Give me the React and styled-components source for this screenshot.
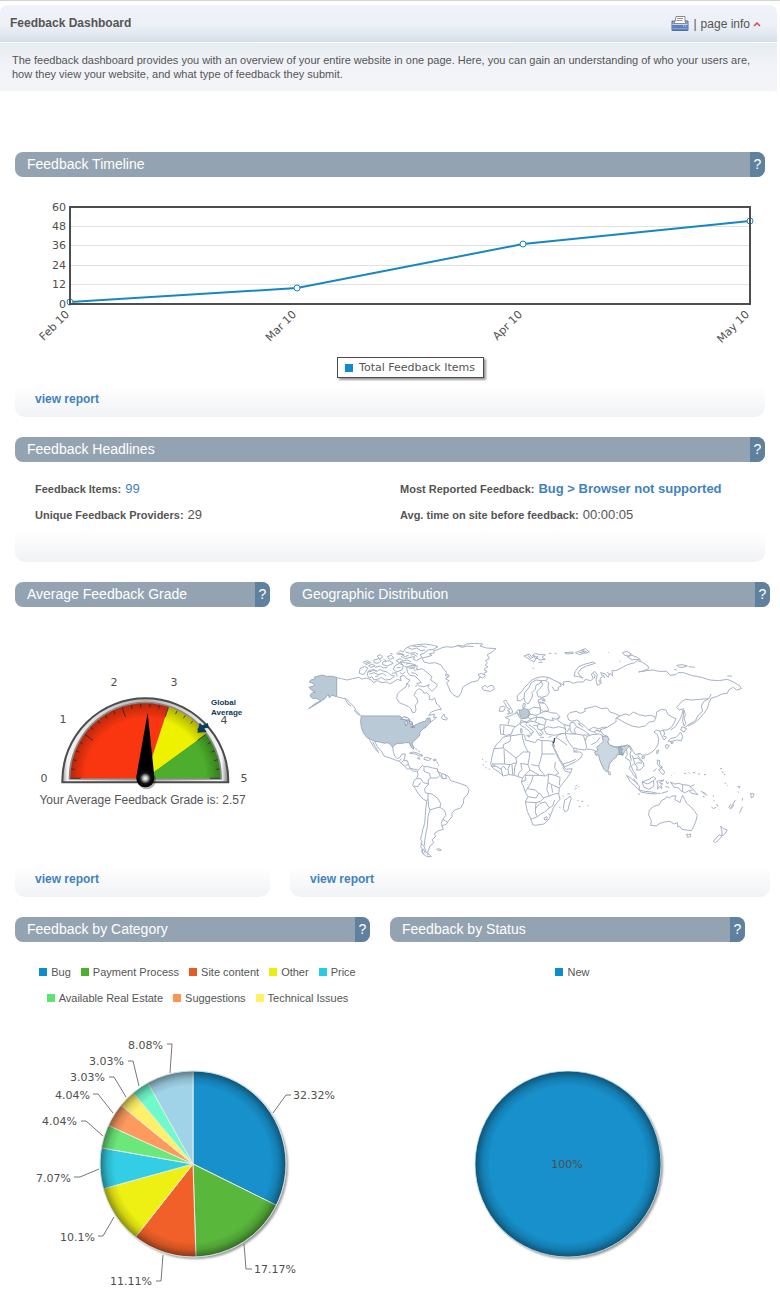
import { createGlobalStyle, styled } from 'styled-components';

const GlobalStyle = createGlobalStyle`
  * {
    box-sizing: border-box;
  }
  body {
    margin: 0;
    background: #fff;
    color: #555;
    font-family: "Liberation Sans", Arial, sans-serif;
    font-size: 12px;
  }
`;

const Page = styled.div`
  border-top: 1px solid #d4d4d4;
  padding-top: 4px;
`;

const TopBar = styled.header`
  display: flex;
  align-items: center;
  justify-content: space-between;
  height: 37px;
  margin-right: 3px;
  padding: 0 16px 0 10px;
  border-radius: 8px 8px 0 0;
  background: linear-gradient(#f0f3f9, #edf1f7 50%, #e2e8f2 80%, #d5dee6);
`;

const PageTitle = styled.h1`
  margin: 0;
  padding-bottom: 2px;
  font-size: 12px;
  font-weight: bold;
`;

const Tools = styled.div`
  display: flex;
  align-items: center;
  gap: 4px;
`;

const ToolButton = styled.button`
  display: flex;
  align-items: center;
  gap: 3px;
  padding: 0;
  border: 0;
  background: none;
  color: inherit;
  font: inherit;
  cursor: pointer;
`;

const Intro = styled.p`
  margin: 1px 3px 0 0;
  padding: 10px 16px 10px 12px;
  background: linear-gradient(#e7edf1, #f2f3f8 50%, #f3f4f8);
  font-size: 11px;
  line-height: 14px;
`;

const Dashboard = styled.main`
  display: flex;
  flex-direction: column;
  gap: 20px;
  margin-top: 61px;
  padding: 0 10px 0 15px;
`;

const Row = styled.div`
  display: grid;
  grid-template-columns: ${({ $columns }) => $columns || '1fr'};
  gap: 20px;
  padding-right: ${({ $inset }) => $inset || 0}px;
`;

const PanelBox = styled.section`
  display: flex;
  flex-direction: column;
  min-width: 0;
`;

const PanelHeader = styled.div`
  display: flex;
  height: 25px;
  overflow: hidden;
  border-radius: 8px;
  background: #94a3b1;
  color: #fff;
`;

const PanelTitle = styled.h2`
  flex: 1;
  margin: 0;
  padding-left: 12px;
  font-size: 14px;
  font-weight: normal;
  line-height: 24px;
`;

const HelpButton = styled.button`
  width: 15px;
  padding: 0 0 2px;
  border: 0;
  background: #5f819d;
  color: #fff;
  font: 14px "Liberation Sans", Arial, sans-serif;
  cursor: pointer;
`;

const PanelBody = styled.div`
  flex: 1;
`;

const PanelFooter = styled.div`
  height: 36px;
  padding-left: 20px;
  border-radius: 0 0 10px 10px;
  background: linear-gradient(#fff 15%, #f1f2f4);
  line-height: 36px;
`;

const ReportLink = styled.a`
  color: #3f83bd;
  font-weight: bold;
  text-decoration: none;
`;

const Drawing = styled.svg`
  display: block;
  width: 100%;
  height: auto;
  text {
    fill: #4f4f4f;
    font-family: "DejaVu Sans", Verdana, sans-serif;
    font-size: 11px;
  }
`;

const ChartKey = styled.div`
  display: flex;
  justify-content: center;
  padding: 5px 0 3px 41px;
`;

const KeyBox = styled.div`
  display: flex;
  align-items: center;
  gap: 6px;
  height: 21px;
  padding: 0 8px 0 7px;
  border: 1px solid #4a4a4a;
  box-shadow: 2px 2px 2px #999;
  font-family: "DejaVu Sans", Verdana, sans-serif;
  font-size: 11px;
`;

const Swatch = styled.span`
  width: 8px;
  height: 8px;
  background: ${({ $color }) => $color};
`;

const Facts = styled.dl`
  display: grid;
  grid-template-columns: 1fr 1fr;
  height: 64px;
  margin: 0;
  padding: 14px 0 0 20px;
  font-size: 11px;
  line-height: 26px;
`;

const Fact = styled.div`
  display: flex;
  gap: 4px;
  height: 26px;
  white-space: nowrap;
  dt {
    font-weight: bold;
  }
  dd {
    margin: 0;
    font-size: 13px;
  }
  a {
    color: #3f83bd;
    text-decoration: none;
  }
`;

const GradeText = styled.p`
  margin: 0 0 54px;
  text-align: center;
  line-height: 14px;
`;

const Legend = styled.ul`
  display: flex;
  flex-wrap: wrap;
  justify-content: center;
  column-gap: 10px;
  min-height: 69px;
  align-content: flex-start;
  margin: 0;
  padding: 17px 0 0 10px;
  list-style: none;
  font-size: 11px;
  line-height: 26px;
  li {
    display: flex;
    align-items: center;
    gap: 4px;
  }
`;

const timeline = [
  { label: 'Feb 10', x: 55, y: 125 },
  { label: 'Mar 10', x: 282, y: 111 },
  { label: 'Apr 10', x: 508, y: 67 },
  { label: 'May 10', x: 735, y: 44 },
];

const timelineTicks = [
  [60, 30], [48, 49], [36, 68], [24, 88], [12, 107], [0, 127],
];

const categories = [
  { name: 'Bug', color: '#0f8ccb' },
  { name: 'Payment Process', color: '#4bb02c' },
  { name: 'Site content', color: '#e95a22' },
  { name: 'Other', color: '#eaed0e' },
  { name: 'Price', color: '#26cbe4' },
  { name: 'Available Real Estate', color: '#60e36e' },
  { name: 'Suggestions', color: '#ff9354' },
  { name: 'Technical Issues', color: '#fff064' },
];

// line: leader points from the rim out to the label
const slices = [
  { value: 32.32, color: '#1790cb', line: '258,102 271,84 276,84', x: 278, y: 88 },
  { value: 17.17, color: '#59b83c', line: '229,233 231,258 237,258', x: 239, y: 262 },
  { value: 11.11, color: '#f06028', line: '148,244 146,270 141,270', x: 137, y: 274, end: true },
  { value: 10.1, color: '#eef014', line: '99,206 88,225 83,225', x: 80, y: 230, end: true },
  { value: 7.07, color: '#33cee6', line: '84,158 65,166 59,166', x: 56, y: 171, end: true },
  { value: 4.04, color: '#6ce77a', line: '88,125 71,110 66,110', x: 62, y: 114, end: true },
  { value: 4.04, color: '#ff9a5f', line: '98,102 83,83 78,83', x: 75, y: 88, end: true },
  { value: 3.03, color: '#fff06a', line: '111,86 99,66 94,66', x: 90, y: 70, end: true },
  { value: 3.03, color: '#70facb', line: '124,75 118,50 113,50', x: 109, y: 54, end: true },
  { value: 8.08, color: '#a1d3e8', line: '155,62 157,33 152,33', x: 148, y: 38, end: true },
];

const americas = [
  // canada
  'M110,143L124,146 142,150 158,146 176,142 186,147 200,144 214,150 220,158 232,152 246,158 262,156 268,162 280,156 292,148 304,152 300,140 312,136 320,146 330,150 322,160 318,170 302,182 292,192 290,206 298,218 312,224 326,230 334,238 336,246 344,248 348,240 346,226 354,216 350,204 342,196 348,184 356,176 368,182 372,190 380,188 388,196 388,208 396,210 404,204 410,222 416,226 424,238 410,240 394,246 386,256 396,254 404,252 400,262 410,262 400,270 392,276',
  'M110,200L124,204 138,206 150,218 162,230 168,242 184,258M136,208L144,222 154,228M162,240L172,252 180,256',
  'M424,262L432,252 434,260 442,264 440,270 428,268Z',
  // arctic islands
  'M290,72L300,62 310,66 316,56 330,48 350,44 376,42 400,46 414,50 400,58 384,60 372,70 360,74 366,82 350,92 340,88 344,80 330,82 316,86 304,80 312,74Z',
  'M322,52L336,58 350,54 362,62 376,60M316,66L330,70 346,68 354,74M296,70L308,72 314,80 326,76M338,48L350,50 364,48 380,52M332,76L340,72 352,80',
  'M320,112L336,106 352,108 350,120 366,116 382,128 396,140 392,150 412,164 408,172 396,184 384,172 388,164 372,170 358,168 350,160 364,158 354,146 344,138 330,136 322,126Z',
  'M202,136L204,124 218,118 232,124 240,118 246,122 262,126 270,134 284,138 272,148 256,150 244,142 238,146 222,150 216,140 208,144Z',
  'M208,132L222,128 234,134 248,130 258,138M226,140L236,138M204,126L214,124 222,120 230,126',
  'M180,116L194,110 204,114 196,126 190,134 178,130Z',
  'M190,96L202,92 212,98 198,104ZM206,108L216,102 226,108 212,112ZM222,90L236,86 244,92 234,100 222,98Z',
  'M232,78L242,74 248,82 238,86ZM248,96L268,92 280,100 262,108 248,104ZM262,80L274,76 282,84 268,88Z',
  'M284,108L298,100 310,106 306,120 290,126 280,118ZM288,92L300,86 310,92 298,98ZM300,96L316,98 346,104 344,112 314,110Z',
  'M196,100L206,96M250,88L258,92M270,70L278,72M276,130L288,128 292,140M318,160L328,166 326,172M346,170L352,166',
  'M226,112L240,108 250,114 262,112M300,128L308,132 316,126M310,92L322,90 334,96M318,102L332,100M290,114L302,112M328,116L340,114 346,124M334,128L346,130 354,138',
  // greenland, iceland
  'M372,96L366,84 384,80 396,76 388,72 404,68 400,62 412,60 424,54 440,50 456,52 476,46 490,48 500,42 524,40 548,42 540,48 560,54 588,56 576,66 562,74 568,86 556,92 562,98 556,106 564,110 552,118 560,126 552,130 556,138 548,144 540,140 534,152 516,156 500,164 488,172 484,188 474,202 462,196 452,186 446,172 440,158 448,152 436,146 446,140 436,136 440,128 430,116 422,104 404,98 388,100Z',
  'M540,142L534,134 544,130 552,134M554,120L562,124M470,46L486,52 502,48 520,50M440,132L448,136 444,142',
  'M546,172L556,166 562,172 568,168 578,166 584,176 572,184 558,182 550,180Z',
  // mexico and central america
  'M206,324L214,338 220,350 230,362 236,368 226,350 218,336M224,334L232,350 246,366 252,378 270,384 286,390 298,394 306,402 316,410 322,418 330,416 340,424 352,424',
  'M278,352L280,364 284,378 292,386 300,382 306,372 316,372 314,384 310,392 322,392 326,404 330,414 342,418 352,418M298,394L304,386M310,392L304,398M326,404L316,406',
  // caribbean
  'M328,370L340,366 354,370 368,378 358,378 346,372ZM372,384L380,382 394,386 386,392 372,388ZM352,384L360,384 358,388ZM400,388L408,388 408,392 400,392Z',
  'M346,354L352,360M354,362L360,366M362,372L368,376M410,394L414,402M416,404L416,408',
  // south america
  'M352,424L360,414 368,406 372,410 384,410 398,414 412,416 414,426 424,430 436,434 446,440 452,452 466,456 484,462 500,468 507,478 504,492 492,504 490,520 482,534 464,540 456,550 456,560 446,572 440,582 426,588 430,598 416,602 404,610 406,620 396,630 402,638 390,648 386,660 382,668 394,680 380,680 366,668 368,660 362,650 366,636 362,626 366,612 368,600 374,580 376,556 378,530 380,514 366,504 354,490 346,476 338,466 342,452 350,446 354,434Z',
  'M372,412L372,424 388,430 392,444 384,450 386,462 370,458 362,446 350,446M386,462L374,476 376,488 384,490 396,492 414,506 422,520 420,532 434,542 438,556 428,568 424,580 426,588M384,490L384,506 380,514M384,506L386,530 390,540 408,534 420,532M390,540L384,560 382,590 376,620 372,650 378,664M412,420L420,436 412,444 400,444 392,444M424,432L428,446M436,434L440,446 428,446 420,436M342,468L354,470 362,458M428,568L442,576M370,656L376,670M364,660L372,674M376,664L386,672 380,676M362,640L370,646',
  'M410,658L416,656 424,660 416,662Z',
];

const alaska = 'M110,143L110,200 96,196 88,203 84,192 76,205 64,213 50,222 36,230 26,236 44,222 62,212 50,205 38,205 30,198 34,190 46,186 34,180 27,172 40,168 44,163 28,156 32,150 46,146 42,142 52,139 66,135 80,139 98,139Z';

const usa = 'M184,258L300,258 304,262 316,264 326,268 334,276 340,288 356,280 366,276 376,274 382,264 390,264 392,276 384,284 378,292 370,296 360,306 358,318 350,326 340,334 336,342 342,352 340,358 332,348 328,338 316,338 306,340 294,340 284,344 278,352 270,342 262,338 254,340 240,336 224,334 212,328 200,322 190,308 184,292 182,274Z';

const lakes = 'M302,268L312,260 324,264 330,270 318,270 308,268ZM318,288L314,276 320,270 322,282ZM328,274L336,276 338,282 330,282ZM332,292L342,288 344,292Z';

const eurasia = [
  // british isles and scandinavia
  'M-38,252L-30,246 -38,242 -30,238 -40,232 -44,222 -50,214 -42,210 -38,218 -30,230 -24,240 -22,248 -34,252ZM-62,244L-60,232 -50,228 -44,234 -50,244Z',
  'M-8,212L-8,196 6,184 14,172 26,160 32,152 48,144 66,140 84,142 78,152 64,152 60,160 48,166 46,178 36,188 38,198 32,210 24,222 16,216 12,204 2,212Z',
  'M12,204L14,188 26,174 34,158 48,150 64,152L68,166 58,178 50,186 54,200 66,202 80,198 88,188 84,172 86,158 78,152M8,232L10,220 16,222 14,232',
  // russia
  'M84,142L100,150 118,158 124,168 114,172 116,180 104,182 96,170M118,158L132,166 130,156 148,154 160,160 172,156 190,156 196,148 212,152 220,146 214,132 224,124 232,134 228,150 232,166 244,160 240,146 248,140 242,128 256,132 264,142 270,130 278,138 276,122 288,122 308,112 322,104 344,98 352,92 366,96 384,108 386,116 372,122 356,126 380,122 400,120 416,124 440,124 450,136 468,134 474,128 490,128 514,136 544,142 570,150 596,152 622,148 640,156 660,168 664,176 650,180 640,172 626,180 622,190 606,192 590,200 574,204',
  'M574,192L566,206 552,214 544,228 548,244 536,254 526,272 506,284 492,294M574,204L566,220 562,236 552,250 540,264 524,278 504,288M566,206L540,208 516,210 496,208 484,216 470,232 478,240 490,236 486,254 480,268 466,290 452,300',
  'M492,240L496,254 492,266 498,280 492,288 488,272 490,256Z',
  'M162,138L166,124 176,110 196,102 220,96 226,100 200,108 184,116 174,128 180,138 190,144 176,140Z',
  'M218,130L226,136 222,146M236,150L240,158M250,134L254,144M262,126L268,134',
  // arctic ocean
  'M12,78L28,72 34,80 46,70 60,74 76,74 66,82 76,88 60,90 50,84 42,96 32,90 22,84ZM86,70L94,70M104,70L110,72M134,68L158,66 160,70 138,72ZM166,68L182,62 196,68 178,74ZM184,60L196,56 208,66 196,70Z',
  'M24,76L32,86 44,78 54,82M40,74L46,86 56,78M176,66L190,70M188,60L200,66',
  'M308,68L320,64 334,72 326,78 314,76ZM322,80L336,76 352,82 362,90 348,88 336,90ZM298,92L302,96M470,106L486,104 502,108 490,112 478,112ZM506,110L524,112M462,118L470,120M622,138L636,138M264,66L266,68M38,114L42,116M56,98L68,96',
  // western and central europe
  'M-60,284L-36,286 -14,290 -22,300 -26,312 -40,316 -58,312ZM-48,288L-50,312M-36,284L-32,268 -44,262 -30,258 -18,252 -8,248 -2,262 4,268 0,280 -14,290M-14,250L-6,240 0,240M-10,246L-4,256',
  'M0,280L10,276 20,278 18,284 30,296 42,306 36,308 34,316 28,304 14,292 4,288ZM6,266L24,262 32,268 20,276 4,272M20,316L30,316 28,322ZM2,296L6,296 6,308 2,308Z',
  'M20,278L34,274 46,276 60,282 74,286 72,296 62,300 70,310 60,318 52,306 46,298 36,290 26,284M34,274L32,266 50,262 70,264 78,272 74,286M46,276L50,264M40,286L52,286 60,282M52,286L54,298 62,300M58,308L66,314M60,322L72,322',
  'M26,240L40,232 60,234 62,250 48,256 30,252ZM30,252L24,262M48,256L50,262M54,210L68,204 76,210 70,218 56,216ZM56,218L74,220 82,230 86,242 72,246 62,238 60,228ZM62,250L76,242 92,248 110,250 120,260 108,268 96,264 100,272 88,270 78,268 66,262 52,262M64,208L74,214M66,212L74,208',
  'M120,260L112,270 132,284 150,288M132,284L138,300M148,294L142,306',
  // middle east
  'M72,296L84,290 100,294 116,290 132,294 138,300 136,310 120,312 104,316 90,314 78,310Z',
  'M100,334L108,322 120,312 136,310L140,326 148,340 160,354 164,366 180,366 188,372 182,384 166,396 148,404 132,412 128,400 118,386 110,368 100,350ZM132,412L130,402 150,396 168,388M160,366L172,360M108,322L120,330 142,346M86,322L94,320',
  'M136,310L150,312 168,312 190,316 196,334 200,352 196,360 178,358 162,354M150,280L160,276 170,290 162,300 168,312 154,308 150,296Z',
  'M146,270L142,256 150,248 168,244 182,250 196,244 194,236 214,232 226,228 244,236 262,234 270,246 288,252 300,258 288,264 288,276 270,286 262,292 250,292 236,296 220,292 206,300 196,290 184,280 176,284 178,274 170,270 156,274Z',
  'M170,290L182,296 196,304 208,314 190,316M206,300L220,306 232,300 240,304M196,334L200,320 216,314 238,312 250,318M200,358L214,358 228,364M214,344L230,336 240,322M178,284L190,292M222,306L230,312M228,300L244,306',
  // china and mongolia
  'M300,258L316,252 328,256 340,246 356,254 376,258 392,256 408,262 402,274 388,276 376,288 356,292 336,288 318,280 304,272 290,264',
  'M408,262L410,246 424,238 438,240 444,254 458,262 468,266 462,280 454,292 442,300 430,300 420,304 410,300 402,306 412,314 416,326 414,344 406,356 396,366 382,374 368,376 360,370 346,374 338,362 330,348 318,346 300,350 282,350 268,344 262,332 262,320 248,312 240,300 262,292',
  'M430,300L434,312 430,318 440,322 432,330 424,316 420,304M410,362L416,360 414,370 410,370ZM366,380L374,380 372,386 366,386Z',
  'M486,290L500,296 492,306 482,300ZM482,306L488,320 484,332 470,330 456,334 444,334 452,326 468,322 476,314ZM438,344L448,346 442,356 436,352ZM452,338L460,336 456,342Z',
  // south-east asia
  'M264,424L270,426 272,434 266,434ZM320,360L322,374 316,384 330,392 332,404 328,416 334,424 340,434 350,446 346,432 338,420 334,408 344,400 352,412 350,420 360,420 372,408 370,398 360,386 354,376 360,370M344,400L340,386 354,384 366,398M340,386L336,376M348,404L352,398 366,400M328,348L334,362 330,372 334,392',
  'M320,436L332,444 346,456 358,468 358,480 344,468 330,454ZM358,480L374,484 394,486 412,490 404,492 382,490 362,486ZM366,456L376,452 388,448 400,440 408,446 400,452 402,464 398,472 386,478 372,472ZM366,456L384,462 400,452M340,446L354,462',
  'M412,478L414,464 410,454 432,450 418,458 428,462 422,466 426,476 418,470ZM412,390L420,392 418,404 428,412 420,412 412,402ZM416,418L426,416 434,426 430,434 422,428ZM400,424L410,416M424,490L444,484M438,452L442,462 446,456M414,490L422,490M436,470L448,472M354,492L360,492',
  'M452,456L464,462 476,460 488,464 506,466 518,476 528,488 534,494 516,490 506,482 496,488 484,484 476,474 462,472ZM488,464L488,484M510,470L524,464M542,484L556,490M550,490L562,496M508,482L518,480',
  // oceania
  'M388,540L400,530 418,524 424,512 436,506 440,500 448,504 456,498 468,498 464,508 480,518 484,506 488,496 494,508 500,520 512,530 524,544 532,556 528,572 522,588 514,602 498,600 486,598 478,588 474,592 472,578 462,582 450,574 434,576 420,580 408,588 392,586 394,572 386,556Z',
  'M500,612L506,614 512,612 512,620 502,622ZM602,588L610,596 622,600 614,612 606,618 606,604ZM598,614L606,618 594,632 586,638 580,634Z',
  'M454,436L456,436M462,428L464,430M492,430L498,430M506,428L510,430M520,430L522,426 526,430M534,432L540,432M552,434L558,434M600,416L606,416M606,424L610,430M612,434L616,434M614,460L618,460M622,466L624,468M652,470L660,470 656,476M654,484L656,488M692,490L702,492 700,500 694,504ZM580,496L580,500M582,510L582,514M574,530L580,536 588,532M590,522L594,530M630,538L646,510M634,536L642,524M626,534L632,522M658,550L668,530M668,504L666,512M548,500L554,500M596,538L598,538',
  // africa
  'M-78,356L-70,342 -60,334 -52,322 -36,318 -14,316 6,312 14,316 16,330 30,334 46,338 52,328 66,332 84,332 98,334 104,350 96,342 108,370 118,390 128,406 138,418 156,416 152,428 140,446 128,460 118,474 116,492 120,508 108,522 100,534 94,550 88,566 72,582 46,586 38,584 32,566 22,544 16,516 24,500 16,486 10,468 4,456 8,444 -6,440 -16,436 -34,434 -50,438 -66,424 -80,416 -88,402 -84,380Z',
  'M-78,356L-50,354 -50,344 -30,334 -28,318M-50,354L-12,384 10,366 30,366M6,312L8,326 14,346 24,366M66,332L66,372 104,372M66,372L60,396 56,408 34,404M30,366L28,382 24,404 2,400M-12,384L-10,398 -30,404 -46,402 -84,402M-46,402L-48,358M-84,402L-66,412 -56,418 -52,438M-30,404L-36,416 -34,434M-10,398L-16,412 -18,436M2,400L6,418 -4,430 -6,440M24,404L30,420 14,436 8,444M30,420L48,430 58,436 76,438 86,432 104,436 116,430 104,414 106,396M56,408L60,420 76,438M128,412L136,424 152,428M104,436L120,442 118,466M86,432L84,458 100,466 118,474M14,436L40,436 58,436M40,436L34,456 22,476 16,486M22,476L46,480 56,490 48,504 24,500M84,458L80,478 88,498 70,504 60,490 56,490M88,498L104,492 116,490M16,516L48,518 62,514 74,502M48,518L46,548 52,560 38,566 32,566M46,536L60,520 76,516 88,534 74,546 62,552 52,560M88,534L98,528 104,510M72,564L80,560 82,568 74,570ZM-58,418L-50,408 -40,420M-24,404L-22,434M-88,408L-74,410M94,466L98,488M4,456L18,450 16,440M86,550L90,556',
  'M134,510L142,506 150,498 154,506 148,522 144,540 136,546 130,536 132,524ZM166,470L172,464M174,472L178,468M184,514L190,514M172,514L176,510M176,530L182,530M202,526L206,528M128,496L132,500M118,532L122,534M142,492L150,492M164,478L170,474M-114,388L-110,390M-104,394L-100,396M-112,404L-108,406M-104,412L-100,414M-94,418L-90,416',
];

const germany = 'M-2,240L8,240 10,232 16,236 26,240 28,252 22,264 6,266 0,258Z';
const india = 'M246,320L262,318 268,330 262,336 270,346 286,352 300,356 302,348 316,350 322,344 328,348 320,358 314,364 308,376 304,362 298,374 292,372 290,380 278,390 268,402 266,418 260,426 252,418 244,402 238,386 236,374 228,376 224,366 234,362 230,352 240,344 250,334Z';

function polar(cx, cy, r, degrees) {
  const angle = (degrees * Math.PI) / 180;
  return [cx + r * Math.cos(angle), cy - r * Math.sin(angle)];
}

function wedge(cx, cy, r, from, to) {
  const [x1, y1] = polar(cx, cy, r, from);
  const [x2, y2] = polar(cx, cy, r, to);
  const large = from - to > 180 ? 1 : 0;
  return `M${cx},${cy}L${x1},${y1}A${r},${r} 0 ${large} 1 ${x2},${y2}Z`;
}

function Panel({ title, report, footer, children }) {
  return (
    <PanelBox>
      <PanelHeader>
        <PanelTitle>{title}</PanelTitle>
        <HelpButton type="button" aria-label={`Help: ${title}`}>?</HelpButton>
      </PanelHeader>
      <PanelBody>{children}</PanelBody>
      {footer && (
        <PanelFooter>
          {report && <ReportLink href="#report">view report</ReportLink>}
        </PanelFooter>
      )}
    </PanelBox>
  );
}

function PrinterIcon() {
  return (
    <svg width="18" height="16" viewBox="0 0 18 16" aria-hidden="true">
      <path d="M1 5h16v9.500H1z" fill="#8fabd6" stroke="#55719f" />
      <path d="M1.500 9h15v5h-15z" fill="#5f81ba" />
      <path d="M1.500 8.500h15" stroke="#c3d4ee" />
      <path d="M5 .5h9v5l1 2H3l1-2z" fill="#fff" stroke="#888" />
      <path d="M6 2.500h6M5.500 4.500h6" stroke="#999" />
      <path d="M12 10h1M14 10h1" stroke="#dfe9f8" />
      <path d="M2 12.500h14" stroke="#86a3d2" />
    </svg>
  );
}

function TimelineChart() {
  return (
    <Drawing viewBox="0 0 750 175" role="img" aria-label="Feedback timeline">
      {timelineTicks.slice(1, 5).map(([value, y]) => (
        <path key={value} d={`M56 ${y}.5H734`} stroke="#e2e2e2" />
      ))}
      <polyline
        points={timeline.map((point) => `${point.x},${point.y}`).join(' ')}
        fill="none"
        stroke="#1688bf"
        strokeWidth="2"
      />
      {timeline.map((point) => (
        <circle key={point.label} cx={point.x} cy={point.y} r="3" fill="#fff" stroke="#1688bf" />
      ))}
      <rect x="55" y="30" width="680" height="97" fill="none" stroke="#4d4d4d" strokeWidth="2" />
      {timelineTicks.map(([value, y]) => (
        <text key={value} x="51" y={y + 4} textAnchor="end">{value}</text>
      ))}
      {timeline.map((point) => (
        <text
          key={point.label}
          textAnchor="end"
          transform={`translate(${point.x} 138) rotate(-45)`}
        >
          {point.label}
        </text>
      ))}
    </Drawing>
  );
}

function GradeGauge() {
  const ticks = Array.from({ length: 26 }, (_, i) => i);
  return (
    <Drawing viewBox="0 0 255 186" role="img" aria-label="Average feedback grade gauge">
      <defs>
        <linearGradient id="rim" x1="0" x2="1">
          <stop offset="0" stopColor="#999" />
          <stop offset="0.03" stopColor="#f4f4f4" />
          <stop offset="0.5" stopColor="#b5b5b5" />
          <stop offset="0.96" stopColor="#f4f4f4" />
          <stop offset="1" stopColor="#777" />
        </linearGradient>
        <radialGradient id="face" gradientUnits="userSpaceOnUse" cx="376" cy="355" r="226">
          <stop offset="0.8" stopColor="#000" stopOpacity="0" />
          <stop offset="1" stopColor="#000" stopOpacity="0.28" />
        </radialGradient>
        <radialGradient id="hub">
          <stop offset="0" stopColor="#fff" />
          <stop offset="0.25" stopColor="#bbb" />
          <stop offset="0.6" stopColor="#111" />
          <stop offset="1" stopColor="#000" />
        </radialGradient>
      </defs>
      <g transform="translate(5 53) scale(0.3333)">
        <path d="M127,367V362A249,247 0 0 1 625,362V367Z" fill="url(#rim)" stroke="#4c4c4c" strokeWidth="6" />
        <path d="M146,359V355A230,230 0 0 1 606,355V359Z" fill="#888" />
        <path d={wedge(376, 355, 225, 180, 72)} fill="#fa3610" />
        <path d={wedge(376, 355, 225, 72, 36)} fill="#eef200" />
        <path d={wedge(376, 355, 225, 36, 0)} fill="#4cae2c" />
        <path d={wedge(376, 355, 225, 180, 0)} fill="url(#face)" />
        {ticks.map((i) => {
          const major = i % 5 === 0;
          const [x1, y1] = polar(376, 355, 224, 180 - i * 7.2);
          const [x2, y2] = polar(376, 355, major ? 194 : 213, 180 - i * 7.2);
          return (
            <path
              key={i}
              d={`M${x1},${y1}L${x2},${y2}`}
              stroke="#222"
              strokeOpacity="0.75"
              strokeWidth="3"
            />
          );
        })}
        <path d="M532,218L539,188 547,196 564,189 566,204 553,205 560,216Z" fill="#0d3d5c" />
        <circle cx="380" cy="360" r="28" fill="#000" opacity="0.3" />
        <path d="M383,158L403,350 376,372 349,350Z" fill="#000" />
        <circle cx="376" cy="355" r="27" fill="url(#hub)" />
      </g>
      <text x="29" y="175" textAnchor="middle">0</text>
      <text x="48" y="116" textAnchor="middle">1</text>
      <text x="99" y="79" textAnchor="middle">2</text>
      <text x="159" y="79" textAnchor="middle">3</text>
      <text x="209" y="117" textAnchor="middle">4</text>
      <text x="229" y="175" textAnchor="middle">5</text>
      <MarkerText x="196" y="98">Global</MarkerText>
      <MarkerText x="196" y="108">Average</MarkerText>
    </Drawing>
  );
}

const MarkerText = styled.text`
  && {
    fill: #0d3a55;
    font: bold 8px "Liberation Sans", Arial, sans-serif;
  }
`;

function WorldMap() {
  return (
    <Drawing viewBox="0 0 480 254" role="img" aria-label="World map of feedback">
      <g fill="none" stroke="#a6b1c4" strokeWidth="3" strokeLinejoin="round">
        <g transform="translate(10 23) scale(0.3333)">
          {americas.map((d) => <path key={d} d={d} />)}
          <path d={alaska} fill="#b9c9d6" stroke="#9aabbb" />
          <path d={usa} fill="#b9c9d6" stroke="#9aabbb" />
          <path d={lakes} fill="#fff" stroke="#8b9cb0" />
        </g>
        <g transform="translate(230 23) scale(0.3333)">
          {eurasia.map((d) => <path key={d} d={d} />)}
          <path d={germany} fill="#b9c9d6" stroke="#9aabbb" />
          <path d={india} fill="#ccd8e1" stroke="#9aabbb" />
          <path d="M296,350L304,352 308,360 304,364 308,376 298,372Z" fill="#a9bccb" stroke="#8b9cb0" />
          <path d="M104,324L102,336 98,340" stroke="#2f4963" strokeWidth="4" />
        </g>
      </g>
    </Drawing>
  );
}

function PieShading({ id }) {
  return (
    <>
      <defs>
        <radialGradient id={id}>
          <stop offset="0.84" stopColor="#000" stopOpacity="0" />
          <stop offset="0.92" stopColor="#000" stopOpacity="0.13" />
          <stop offset="1" stopColor="#000" stopOpacity="0.42" />
        </radialGradient>
      </defs>
      <circle cx="178" cy="153" r="93" fill={`url(#${id})`} />
      <circle cx="178" cy="153" r="93" fill="none" stroke="#cfe3ea" strokeOpacity="0.8" />
    </>
  );
}

const PieDisc = styled.circle`
  filter: drop-shadow(2px 2px 1px #999);
`;

function CategoryPie() {
  let angle = 90;
  const total = slices.reduce((sum, slice) => sum + slice.value, 0);
  const wedges = slices.map((slice) => {
    const from = angle;
    angle -= (slice.value / total) * 360;
    return { ...slice, d: wedge(178, 153, 93, from, angle) };
  });

  return (
    <Drawing viewBox="0 0 355 289" role="img" aria-label="Feedback by category">
      <PieDisc cx="178" cy="153" r="93" fill="#ddd" />
      {wedges.map((slice) => (
        <path key={slice.d} d={slice.d} fill={slice.color} stroke="#e3eedd" strokeWidth="1" />
      ))}
      <PieShading id="category-shade" />
      {wedges.map((slice) => (
        <g key={slice.line}>
          <polyline points={slice.line} fill="none" stroke="#777" />
          <text x={slice.x} y={slice.y} textAnchor={slice.end ? 'end' : 'start'}>
            {slice.value}%
          </text>
        </g>
      ))}
    </Drawing>
  );
}

function StatusPie() {
  return (
    <Drawing viewBox="0 0 355 289" role="img" aria-label="Feedback by status">
      <PieDisc cx="178" cy="153" r="93" fill="#1790cb" />
      <PieShading id="status-shade" />
      <text x="177" y="157" textAnchor="middle">100%</text>
    </Drawing>
  );
}

export default function App() {
  return (
    <Page>
      <GlobalStyle />
      <TopBar>
        <PageTitle>Feedback Dashboard</PageTitle>
        <Tools>
          <ToolButton type="button" aria-label="Print">
            <PrinterIcon />
          </ToolButton>
          <span>|</span>
          <ToolButton type="button">
            page info
            <svg width="8" height="6" viewBox="0 0 8 6" aria-hidden="true">
              <path d="M1 5L4 2 7 5" fill="none" stroke="#d04a52" strokeWidth="1.500" />
            </svg>
          </ToolButton>
        </Tools>
      </TopBar>
      <Intro>
        The feedback dashboard provides you with an overview of your entire website in one page.
        Here, you can gain an understanding of who your users are, how they view your website, and
        what type of feedback they submit.
      </Intro>
      <Dashboard>
        <Row $inset={5}>
          <Panel title="Feedback Timeline" footer report>
            <TimelineChart />
            <ChartKey>
              <KeyBox>
                <Swatch $color="#0f8ccb" />
                Total Feedback Items
              </KeyBox>
            </ChartKey>
          </Panel>
        </Row>
        <Row $inset={5}>
          <Panel title="Feedback Headlines" footer>
            <Facts>
              <Fact>
                <dt>Feedback Items:</dt>
                <dd><a href="#items">99</a></dd>
              </Fact>
              <Fact>
                <dt>Most Reported Feedback:</dt>
                <dd><a href="#bug"><b>Bug &gt; Browser not supported</b></a></dd>
              </Fact>
              <Fact>
                <dt>Unique Feedback Providers:</dt>
                <dd>29</dd>
              </Fact>
              <Fact>
                <dt>Avg. time on site before feedback:</dt>
                <dd>00:00:05</dd>
              </Fact>
            </Facts>
          </Panel>
        </Row>
        <Row $columns="255fr 480fr">
          <Panel title="Average Feedback Grade" footer report>
            <GradeGauge />
            <GradeText>Your Average Feedback Grade is: 2.57</GradeText>
          </Panel>
          <Panel title="Geographic Distribution" footer report>
            <WorldMap />
          </Panel>
        </Row>
        <Row $columns="1fr 1fr" $inset={25}>
          <Panel title="Feedback by Category">
            <Legend>
              {categories.map((category) => (
                <li key={category.name}>
                  <Swatch $color={category.color} />
                  {category.name}
                </li>
              ))}
            </Legend>
            <CategoryPie />
          </Panel>
          <Panel title="Feedback by Status">
            <Legend>
              <li>
                <Swatch $color="#0f8ccb" />
                New
              </li>
            </Legend>
            <StatusPie />
          </Panel>
        </Row>
      </Dashboard>
    </Page>
  );
}
